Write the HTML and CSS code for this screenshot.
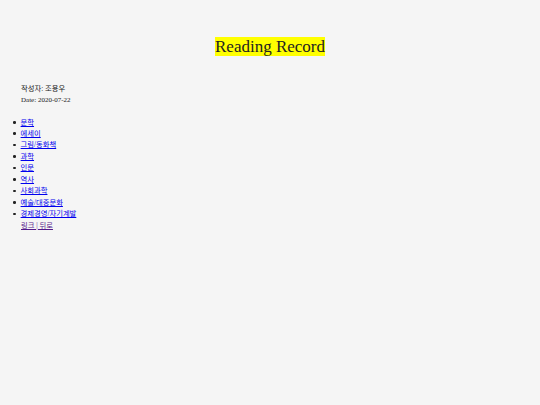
FILE: index.html
```html
<!DOCTYPE html>
<html lang="ko">
<head>
<meta charset="utf-8">
<title>Reading Record</title>
<link rel="stylesheet" href="styles.css">
</head>
<body>
<header class="head">
  <h1 class="title"><span class="mark">Reading Record</span></h1>
</header>
<div class="meta">
  <p class="line">작성자: 조용우</p>
  <p class="line">Date: 2020-07-22</p>
</div>
<ul class="cats">
  <li><a href="#" class="new">문학</a></li>
  <li><a href="#" class="new">에세이</a></li>
  <li><a href="#" class="new">그림/동화책</a></li>
  <li><a href="#" class="new">과학</a></li>
  <li><a href="#" class="new">인문</a></li>
  <li><a href="#" class="new">역사</a></li>
  <li><a href="#" class="new">사회과학</a></li>
  <li><a href="#" class="new">예술/대중문화</a></li>
  <li><a href="#" class="new">경제경영/자기계발</a></li>
</ul>
<div class="back"><a href="#" class="seen">링크 | 뒤로</a></div>
</body>
</html>
```
FILE: styles.css
```css
html, body {
  margin: 0;
  padding: 0;
  background: #f5f5f5;
}
body {
  font-family: "Liberation Serif", "Noto Sans CJK KR", serif;
  font-size: 7px;
  color: #222;
}
.head {
  padding-top: 37px;
  text-align: center;
}
.title {
  margin: 0;
  font-size: 17px;
  font-weight: normal;
  line-height: 20px;
}
.mark {
  background: #ffff00;
  color: #222;
}
.meta {
  padding: 26px 0 0 21px;
}
.line {
  margin: 0;
  line-height: 11.5px;
}
.line:first-child {
  font-size: 7.3px;
}
.cats {
  margin: 10.5px 0 0 0;
  padding: 0 0 0 13px;
  list-style: none;
  font-size: 7.3px;
}
.cats li {
  display: flex;
  align-items: center;
  gap: 5px;
  line-height: 11.45px;
}
.cats li::before {
  content: "";
  width: 2.6px;
  height: 2.6px;
  border-radius: 50%;
  background: #222;
}
.back {
  padding-left: 21px;
  line-height: 11.45px;
  font-size: 7.3px;
}
.new {
  color: #0000ee;
}
.seen {
  color: #551a8b;
}
```
